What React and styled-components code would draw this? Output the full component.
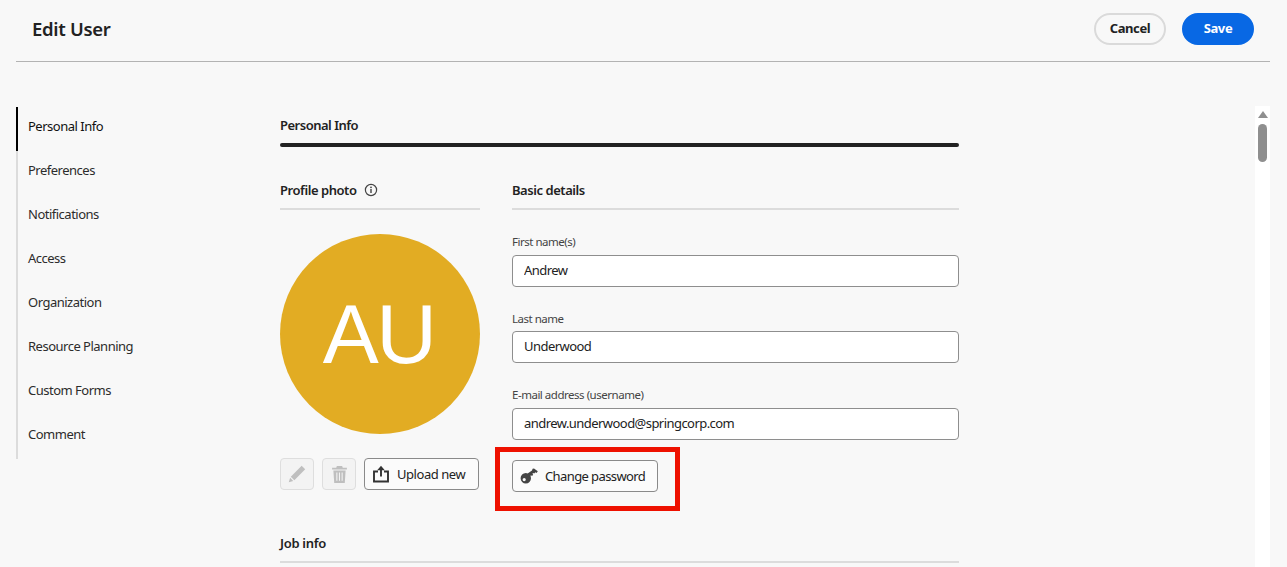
import React from "react";
import styled, { createGlobalStyle } from "styled-components";

const Global = createGlobalStyle`
  html, body { margin: 0; padding: 0; background: #f8f8f8; }
  body { font-family: "Noto Sans", "Open Sans", sans-serif; color: #1f1f1f; }
  * { box-sizing: border-box; }
`;
const Page = styled.div`
  position: relative; width: 1287px; height: 567px; overflow: hidden;
  background: #f8f8f8; padding: 0 17px 0 16px;
`;
const Header = styled.header`
  height: 62px; display: flex; align-items: center; justify-content: space-between;
  padding: 0 16px 4px 16px; border-bottom: 1px solid #b3b3b3;
`;
const Title = styled.h1`
  margin: 0; font-size: 18.5px; font-weight: 600; color: #222; letter-spacing: -0.3px;
`;
const Actions = styled.div`display: flex; gap: 16px;`;
const Pill = styled.button`
  width: 72px; height: 32px; border-radius: 16px; font: 700 13px "Noto Sans", sans-serif;
  letter-spacing: -0.4px; padding: 0 0 2px;
  border: 2px solid ${p => (p.$primary ? "#0868e4" : "#dadada")};
  background: ${p => (p.$primary ? "#0868e4" : "#f8f8f8")};
  color: ${p => (p.$primary ? "#fff" : "#222")};
`;
const Body = styled.div`display: flex; padding-top: 45px; height: 505px;`;
const Nav = styled.nav`
  width: 264px; flex: none; display: flex; flex-direction: column;
`;
const NavItem = styled.div`
  height: 44px; display: flex; align-items: center; padding: 0 0 6px 10px;
  width: 200px; font-size: 13px; letter-spacing: -0.5px;
  border-left: 2px solid ${p => (p.$active ? "#000" : "#dcdcdc")};
  color: ${p => (p.$active ? "#111" : "#2c2c2c")};
`;
const Main = styled.main`
  width: 679px; flex: none; display: flex; flex-direction: column;
`;
const SectionTitle = styled.div`
  font-size: 13px; font-weight: 600; color: #222; letter-spacing: -0.5px; line-height: 18px;
  padding-top: 9px; height: 36px;
`;
const SectionBar = styled.div`
  height: 4px; background: #222; border-radius: 2px; margin-bottom: 1px;
`;
const Columns = styled.div`
  display: grid; grid-template-columns: 200px 447px; column-gap: 32px; padding-top: 27px;
`;
const ColHead = styled.div`
  display: flex; align-items: center; gap: 8px; height: 35px; padding-bottom: 3px;
  font-size: 13px; font-weight: 600; color: #222; letter-spacing: -0.45px;
  border-bottom: 2px solid #dcdcdc;
`;
const Avatar = styled.div`
  width: 200px; height: 200px; border-radius: 50%; background: #e2ac23; margin-top: 24px;
  display: flex; align-items: center; justify-content: center; padding-right: 3px;
  color: #fff; font: 400 84px "Liberation Sans", sans-serif; letter-spacing: -2.5px;
`;
const PhotoActions = styled.div`display: flex; gap: 8px; margin-top: 24px;`;
const IconButton = styled.button`
  width: 34px; height: 32px; padding: 0; border-radius: 4px; border: 1px solid #dedede;
  background: #f3f3f3; display: flex; align-items: center; justify-content: center;
`;
const OutlineButton = styled.button`
  height: 32px; width: ${p => p.$w}px; border: 1px solid #8a8a8a; border-radius: 4px;
  background: #fbfbfb; display: flex; align-items: center; gap: ${p => p.$gap}px; padding: 0 0 0 ${p => p.$pl}px;
  font: 400 13px "Noto Sans", sans-serif; color: #222; letter-spacing: ${p => p.$ls}px;
`;
const Form = styled.div`display: flex; flex-direction: column;`;
const Label = styled.label`
  display: block; font-size: 11.5px; color: #444; letter-spacing: -0.48px; line-height: 16px;
  margin-top: 24px; margin-bottom: ${p => p.$mb}px;
`;
const Input = styled.input`
  display: block; width: 100%; height: 32px; border: 1px solid #8e8e8e; border-radius: 4px;
  background: #fff; padding: 0 11px 2px; font: 400 13px "Noto Sans", sans-serif; color: #222;
  letter-spacing: -0.55px; outline: none;
`;
const PasswordRow = styled.div`margin-top: 20px;`;
const JobHead = styled.div`
  margin-top: 42px; height: 29px; width: 679px; font-size: 13px; font-weight: 600;
  letter-spacing: -0.3px; color: #222; border-bottom: 2px solid #dcdcdc;
`;
const Track = styled.div`
  margin-left: auto; width: 15px; height: 461px; margin-top: -1px; background: #fff; flex: none;
  display: flex; flex-direction: column; align-items: center; padding-top: 5px;
`;
const Thumb = styled.div`
  width: 9px; height: 38px; border-radius: 4.5px; background: #8f8f8f; margin-top: 6px;
`;
const Highlight = styled.div`
  position: absolute; left: 495px; top: 447px; width: 185px; height: 64px;
  border: 5px solid #ee1100; pointer-events: none;
`;

const Info = () => (
  <svg width="14" height="14" viewBox="0 0 14 14" fill="none">
    <circle cx="7" cy="7" r="5.6" stroke="#444" strokeWidth="1.2" />
    <rect x="6.3" y="6" width="1.4" height="4" fill="#444" />
    <circle cx="7" cy="4.3" r="0.9" fill="#444" />
  </svg>
);
const Pencil = () => (
  <svg width="20" height="20" viewBox="0 0 18 18">
    <path d="M13.2 1.6 16.4 4.8 6.6 14.6 3.4 11.4Z M2.8 12.4 5.6 15.2 1.6 16.4Z" fill="#bfbfbf" />
  </svg>
);
const Trash = () => (
  <svg width="17" height="19" viewBox="0 0 16 18">
    <path d="M5.5 1h5l.6 1.6H15v1.6H1V2.6h3.9Z M2.2 5.2h11.6L13 17H3Z" fill="#bfbfbf" />
    <path d="M5.5 7v8M8 7v8M10.5 7v8" stroke="#f3f3f3" strokeWidth="1" />
  </svg>
);
const Share = () => (
  <svg width="18" height="18" viewBox="0 0 18 18" fill="none">
    <path d="M6 6.5H2v10h14v-10H12" stroke="#333" strokeWidth="1.9" />
    <path d="M9 11.5V3" stroke="#333" strokeWidth="1.9" />
    <path d="M5.2 5.2 9 .8 12.8 5.2Z" fill="#333" />
  </svg>
);
const Key = () => (
  <svg width="18" height="18" viewBox="0 0 18 18">
    <path fillRule="evenodd" fill="#444" d="M5.8 6a5.2 5.2 0 1 1-5.2 5.2A5.2 5.2 0 0 1 5.8 6ZM4.2 11a1.6 1.6 0 1 0 0 3.2 1.6 1.6 0 0 0 0-3.2Z" />
    <path fill="#444" d="M7.6 6.6 12 3.4 12.6 1.8 14 1.6 17.8 4.2 16.6 6 15.4 5.2 14.2 6.6 13.2 5.9 12.4 6.8 13.2 7.8 12 9 11 8.2 9.8 9.6Z" />
  </svg>
);

const navItems = ["Personal Info","Preferences","Notifications","Access","Organization","Resource Planning","Custom Forms","Comment"];

export default function App() {
  return (
    <Page>
      <Global />
      <Header>
        <Title>Edit User</Title>
        <Actions>
          <Pill>Cancel</Pill>
          <Pill $primary>Save</Pill>
        </Actions>
      </Header>
      <Body>
        <Nav>
          {navItems.map((n, i) => <NavItem key={n} $active={i === 0}>{n}</NavItem>)}
        </Nav>
        <Main>
          <SectionTitle>Personal Info</SectionTitle>
          <SectionBar />
          <Columns>
            <div>
              <ColHead>Profile photo <Info /></ColHead>
              <Avatar>AU</Avatar>
              <PhotoActions>
                <IconButton aria-label="Edit"><Pencil /></IconButton>
                <IconButton aria-label="Delete"><Trash /></IconButton>
                <OutlineButton $w={115} $pl={7} $gap={7} $ls={-0.45}><Share />Upload new</OutlineButton>
              </PhotoActions>
            </div>
            <Form>
              <ColHead>Basic details</ColHead>
              <Label $mb={5}>First name(s)</Label>
              <Input readOnly value="Andrew" />
              <Label $mb={4}>Last name</Label>
              <Input readOnly value="Underwood" />
              <Label $mb={5}>E-mail address (username)</Label>
              <Input readOnly value="andrew.underwood@springcorp.com" />
              <PasswordRow>
                <OutlineButton $w={146} $pl={7} $gap={7} $ls={-0.6}><Key />Change password</OutlineButton>
              </PasswordRow>
            </Form>
          </Columns>
          <JobHead>Job info</JobHead>
        </Main>
        <Track>
          <svg width="10" height="7" viewBox="0 0 10 7"><path d="M5 0 10 7H0Z" fill="#8f8f8f" /></svg>
          <Thumb />
        </Track>
      </Body>
      <Highlight />
    </Page>
  );
}
